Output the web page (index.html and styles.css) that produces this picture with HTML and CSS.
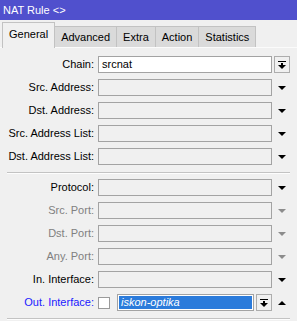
FILE: index.html
```html
<!DOCTYPE html>
<html>
<head>
<meta charset="utf-8">
<link rel="stylesheet" href="styles.css">
</head>
<body>
<div class="title">NAT Rule &lt;&gt;</div>
<div class="tabs">
  <div class="tab active">General</div>
  <div class="tab">Advanced</div>
  <div class="tab">Extra</div>
  <div class="tab">Action</div>
  <div class="tab">Statistics</div>
</div>
<div class="panel">
  <div class="group">
    <div class="row">
      <div class="label">Chain:</div>
      <div class="field white">srcnat</div>
      <div class="ctl btn"><svg width="8" height="8" viewBox="0 0 8 8"><rect x="0" y="0" width="8" height="1" fill="#000"/><rect x="3" y="2" width="2" height="2" fill="#000"/><polygon points="0,4 8,4 4,8" fill="#000"/></svg></div>
    </div>
    <div class="row">
      <div class="label">Src. Address:</div>
      <div class="field"></div>
      <div class="ctl"><svg width="8" height="4" viewBox="0 0 8 4"><polygon points="0,0 8,0 4,4" fill="#000"/></svg></div>
    </div>
    <div class="row">
      <div class="label">Dst. Address:</div>
      <div class="field"></div>
      <div class="ctl"><svg width="8" height="4" viewBox="0 0 8 4"><polygon points="0,0 8,0 4,4" fill="#000"/></svg></div>
    </div>
    <div class="row">
      <div class="label">Src. Address List:</div>
      <div class="field"></div>
      <div class="ctl"><svg width="8" height="4" viewBox="0 0 8 4"><polygon points="0,0 8,0 4,4" fill="#000"/></svg></div>
    </div>
    <div class="row">
      <div class="label">Dst. Address List:</div>
      <div class="field"></div>
      <div class="ctl"><svg width="8" height="4" viewBox="0 0 8 4"><polygon points="0,0 8,0 4,4" fill="#000"/></svg></div>
    </div>
  </div>
  <div class="sep"></div>
  <div class="group">
    <div class="row">
      <div class="label">Protocol:</div>
      <div class="field"></div>
      <div class="ctl"><svg width="8" height="4" viewBox="0 0 8 4"><polygon points="0,0 8,0 4,4" fill="#000"/></svg></div>
    </div>
    <div class="row">
      <div class="label dim">Src. Port:</div>
      <div class="field"></div>
      <div class="ctl"><svg width="8" height="4" viewBox="0 0 8 4"><polygon points="0,0 8,0 4,4" fill="#8c8c8c"/></svg></div>
    </div>
    <div class="row">
      <div class="label dim">Dst. Port:</div>
      <div class="field"></div>
      <div class="ctl"><svg width="8" height="4" viewBox="0 0 8 4"><polygon points="0,0 8,0 4,4" fill="#8c8c8c"/></svg></div>
    </div>
    <div class="row">
      <div class="label dim">Any. Port:</div>
      <div class="field"></div>
      <div class="ctl"><svg width="8" height="4" viewBox="0 0 8 4"><polygon points="0,0 8,0 4,4" fill="#8c8c8c"/></svg></div>
    </div>
    <div class="row">
      <div class="label">In. Interface:</div>
      <div class="field"></div>
      <div class="ctl"><svg width="8" height="4" viewBox="0 0 8 4"><polygon points="0,0 8,0 4,4" fill="#000"/></svg></div>
    </div>
    <div class="row">
      <div class="label blue">Out. Interface:</div>
      <div class="combo">
        <div class="check"></div>
        <div class="selfield"><div class="selected">iskon-optika</div></div>
        <div class="btn small"><svg width="8" height="8" viewBox="0 0 8 8"><rect x="0" y="0" width="8" height="1" fill="#000"/><rect x="3" y="2" width="2" height="2" fill="#000"/><polygon points="0,4 8,4 4,8" fill="#000"/></svg></div>
      </div>
      <div class="ctl"><svg width="8" height="4" viewBox="0 0 8 4"><polygon points="0,4 8,4 4,0" fill="#000"/></svg></div>
    </div>
  </div>
  <div class="sep"></div>
</div>
</body>
</html>
```

FILE: styles.css
```css
html, body {
  margin: 0;
  padding: 0;
  background: #f0f0f0;
  font-family: "Liberation Sans", Arial, sans-serif;
  font-size: 11px;
  color: #000;
}
.title {
  height: 20px;
  line-height: 20px;
  background: #5050cd;
  color: #fff;
  padding-left: 3px;
  font-size: 11px;
}
.tabs {
  height: 27px;
  display: flex;
  align-items: flex-end;
  padding-left: 2px;
  border-bottom: 1px solid #fbfbfb;
}
.tab {
  height: 20px;
  line-height: 21px;
  padding: 0 6px;
  background: #dadada;
  border: 1px solid #c2c2c2;
  border-bottom: none;
  margin-left: -1px;
  box-sizing: content-box;
}
.tab:first-child { margin-left: 0; }
.tab.active {
  height: 25px;
  line-height: 22px;
  background: #f0f0f0;
  margin-bottom: -1px;
  position: relative;
  z-index: 1;
  padding: 0 6px 0 6px;
}
.panel {
  padding-top: 8px;
}
.group {
  display: flex;
  flex-direction: column;
  gap: 6px;
}
.row {
  display: grid;
  grid-template-columns: 94px 174px 16px;
  column-gap: 4px;
  height: 17px;
  align-items: center;
}
.label {
  text-align: right;
  white-space: nowrap;
  line-height: 17px;
}
.label.dim { color: #808080; }
.label.blue { color: #1a1aff; }
.field {
  height: 17px;
  box-sizing: border-box;
  border: 1px solid #a3a3a3;
  background: #f0f0f0;
  padding-left: 3px;
  line-height: 15px;
}
.field.white { background: #fff; }
.ctl {
  margin-left: -2px;
  width: 16px;
  height: 17px;
  display: flex;
  align-items: center;
  justify-content: center;
}
.btn {
  box-sizing: border-box;
  border: 1px solid #adadad;
  background: #f0f0f0;
  display: flex;
  align-items: center;
  justify-content: center;
}
.combo {
  display: flex;
  align-items: center;
  height: 17px;
}
.check {
  width: 12px;
  height: 12px;
  box-sizing: border-box;
  border: 1px solid #9a9a9a;
  background: #fff;
}
.selfield {
  margin-left: 7px;
  width: 137px;
  height: 17px;
  box-sizing: border-box;
  border: 1px solid #a3a3a3;
  background: #fff;
  padding: 1px;
}
.selected {
  height: 13px;
  background: #2b7bdb;
  color: #fff;
  font-style: italic;
  line-height: 13px;
  padding-left: 2px;
}
.btn.small {
  margin-left: 2px;
  width: 16px;
  height: 17px;
}
.sep {
  margin: 7px 7px 0 7px;
  width: 283px;
  height: 0;
  border-top: 1px solid #c3c3c3;
  border-bottom: 1px solid #fdfdfd;
}
.sep + .group { margin-top: 5px; }
```
